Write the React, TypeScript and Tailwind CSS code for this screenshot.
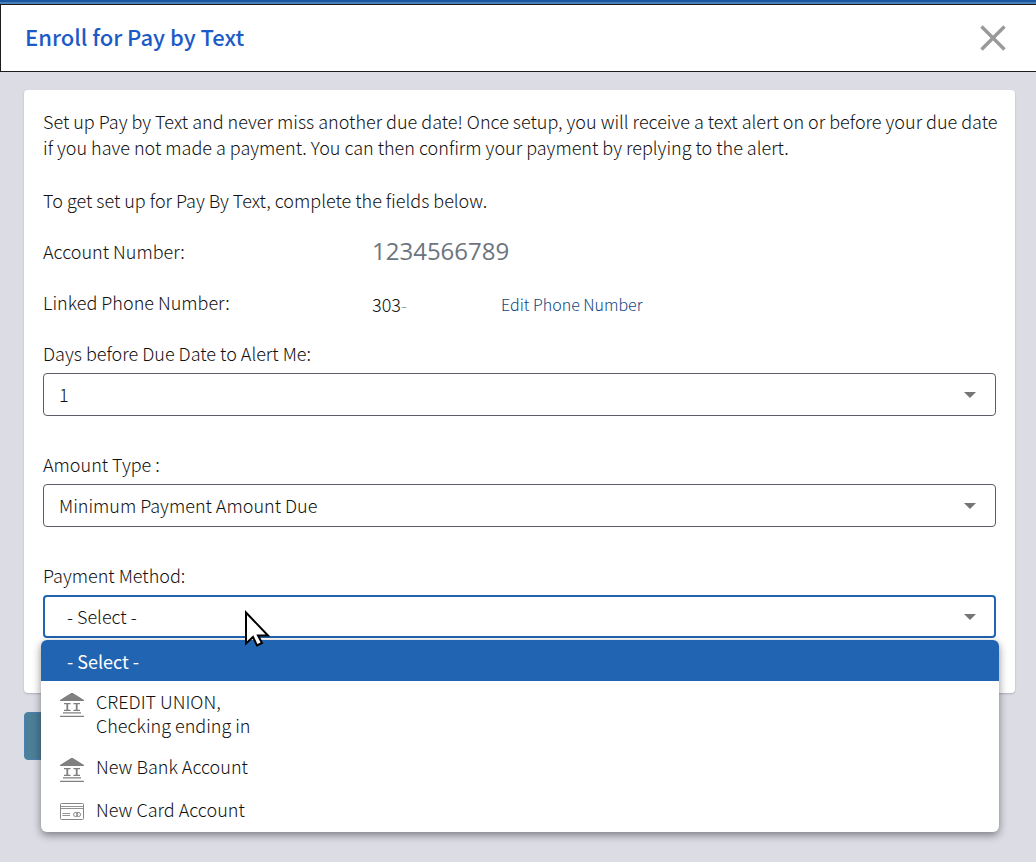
import { type ReactNode, useState } from "react";
import { clsx } from "clsx";

const alertDays = ["1", "2", "3", "5", "7"];
const amountTypes = ["Minimum Payment Amount Due", "Statement Balance"];

const paymentMethods = [
	{ id: "union", lines: ["CREDIT UNION,", "Checking ending in"], icon: "bank" },
	{ id: "bank", lines: ["New Bank Account"], icon: "bank" },
	{ id: "card", lines: ["New Card Account"], icon: "card" },
];

function BankIcon() {
	return (
		<svg
			viewBox="0 0 24 24"
			className="mt-1 size-6 shrink-0 text-[#808080]"
			fill="currentColor"
			aria-hidden="true"
		>
			<path d="M12 -0.5 L24 7 V8 H0 V7 Z" />
			<path d="M4 10h6.6v1.2H8.2v5.6h2.4V18H4v-1.2h2.4v-5.6H4zM13.4 10H20v1.2h-2.4v5.6H20V18h-6.6v-1.2h2.4v-5.6h-2.4z" />
			<path d="M3 19.3h18v1.2H3zM0 22.7h24v1.3H0z" />
		</svg>
	);
}

function CardIcon() {
	return (
		<svg
			viewBox="0 0 24 18"
			className="mt-1.5 h-[18px] w-6 shrink-0 text-[#868686]"
			fill="none"
			stroke="currentColor"
			aria-hidden="true"
		>
			<rect x="0.5" y="0.5" width="23" height="16" rx="1" />
			<path d="M1 3.5h22M1 5.5h22M2.5 10.5h7.5M2.5 12.5h7.5" strokeWidth="0.9" />
			<circle cx="15.7" cy="11.5" r="2.1" />
			<circle cx="18.5" cy="11.5" r="2.1" />
		</svg>
	);
}

function Pointer() {
	return (
		<svg
			viewBox="0 0 28 40"
			className="pointer-events-none absolute left-[201px] top-[15px] z-20 h-10 w-7"
			aria-hidden="true"
		>
			<path
				d="M2 2.5 V33.5 L9 27 L13 35.5 L18 33 L14 25.5 H24 Z"
				fill="#fff"
				stroke="#000"
				strokeWidth="2"
			/>
		</svg>
	);
}

type SelectFieldProps = {
	id: string;
	label: string;
	options: string[];
	active?: boolean;
	children?: ReactNode;
};

function SelectField({ id, label, options, active, children }: SelectFieldProps) {
	return (
		<div>
			<label htmlFor={id} className="block">
				{label}
			</label>
			<div className="relative mt-[7px]">
				<select
					id={id}
					className={clsx(
						"block h-[43px] w-full appearance-none rounded bg-white pb-0.5 outline-none",
						active
							? "border-2 border-[#2164b2] px-[22px]"
							: "border border-[#5c5c6b] px-[15px]",
					)}
				>
					{options.map((option) => (
						<option key={option}>{option}</option>
					))}
				</select>
				<svg
					viewBox="0 0 12 6"
					className="pointer-events-none absolute right-5 top-[19px] h-[6px] w-3 fill-[#757575]"
					aria-hidden="true"
				>
					<path d="M0 0h12L6 6z" />
				</svg>
				{children}
			</div>
		</div>
	);
}

function PaymentMenu() {
	const [selected, setSelected] = useState("");

	return (
		<ul
			role="listbox"
			aria-label="Payment methods"
			className="absolute top-[45px] -right-[3px] -left-[2px] z-10 overflow-hidden rounded-md bg-white shadow-[0_3px_8px_rgba(0,0,0,0.45)]"
		>
			<li role="option" aria-selected={selected === ""}>
				<button
					type="button"
					onClick={() => setSelected("")}
					className="flex h-[41px] w-full items-center bg-[#2164b2] px-[26px] font-normal text-white"
				>
					- Select -
				</button>
			</li>
			{paymentMethods.map((method) => (
				<li
					key={method.id}
					role="option"
					aria-selected={selected === method.id}
				>
					<button
						type="button"
						onClick={() => setSelected(method.id)}
						className={clsx(
							"flex w-full items-start gap-3 px-[19px] pt-2 text-left leading-6",
							method.lines.length > 1 ? "h-[65px]" : "h-[43px]",
						)}
					>
						{method.icon === "bank" ? <BankIcon /> : <CardIcon />}
						<span>
							{method.lines.map((line) => (
								<span key={line} className="block">
									{line}
								</span>
							))}
						</span>
					</button>
				</li>
			))}
		</ul>
	);
}

export default function App() {
	return (
		<div className="min-h-screen bg-[#dcdce5] font-['Noto_Sans_CJK_SC','Noto_Sans',sans-serif] text-[18px] leading-[26px] font-light text-[#111]">
			<div className="h-1 border-b-2 border-[#4a80b8] bg-[#1a56a0]" />
			<header className="flex h-[68px] items-center justify-between border border-r-0 border-[#1c1c1c] bg-white pr-[30px] pl-6">
				<h1 className="pb-1 text-[22px] font-medium text-[#1c5bc7]">
					Enroll for Pay by Text
				</h1>
				<button type="button" aria-label="Close">
					<svg
						viewBox="0 0 26 26"
						className="size-[26px] stroke-[#999]"
						strokeWidth="3.4"
						aria-hidden="true"
					>
						<path d="M1.5 1.5l23 23M24.5 1.5l-23 23" />
					</svg>
				</button>
			</header>
			<main className="pt-[18px] pr-[21px] pl-6">
				<section className="rounded bg-white px-[19px] pt-[18px] pb-[55px] shadow-[0_1px_2px_rgba(0,0,0,0.2)]">
					<p className="-mr-3">
						Set up Pay by Text and never miss another due date! Once setup, you
						will receive a text alert on or before your due date if you have not
						made a payment. You can then confirm your payment by replying to the
						alert.
					</p>
					<p className="mt-[27px]">
						To get set up for Pay By Text, complete the fields below.
					</p>
					<dl className="mt-[25px] grid grid-cols-[329px_1fr] gap-y-[25px]">
						<dt>Account Number:</dt>
						<dd className="font-['Open_Sans',sans-serif] text-[24px] font-normal text-[#6c757d]">
							1234566789
						</dd>
						<dt>Linked Phone Number:</dt>
						<dd className="flex items-center pt-0.5">
							<span className="w-[129px]">
								303<span className="text-[#9a9a9a]">-</span>
							</span>
							<a href="#edit-phone" className="text-[16px] text-[#0d467f]">
								Edit Phone Number
							</a>
						</dd>
					</dl>
					<form className="mt-[23px] flex flex-col gap-[35px]">
						<SelectField
							id="alert-days"
							label="Days before Due Date to Alert Me:"
							options={alertDays}
						/>
						<SelectField
							id="amount-type"
							label="Amount Type :"
							options={amountTypes}
						/>
						<SelectField
							id="payment-method"
							label="Payment Method:"
							options={["- Select -"]}
							active
						>
							<PaymentMenu />
							<Pointer />
						</SelectField>
					</form>
				</section>
				<button
					type="submit"
					aria-label="Continue"
					className="mt-[19px] block h-12 w-40 rounded border border-[#4a80b0] bg-[#4c7f98]"
				/>
			</main>
		</div>
	);
}
